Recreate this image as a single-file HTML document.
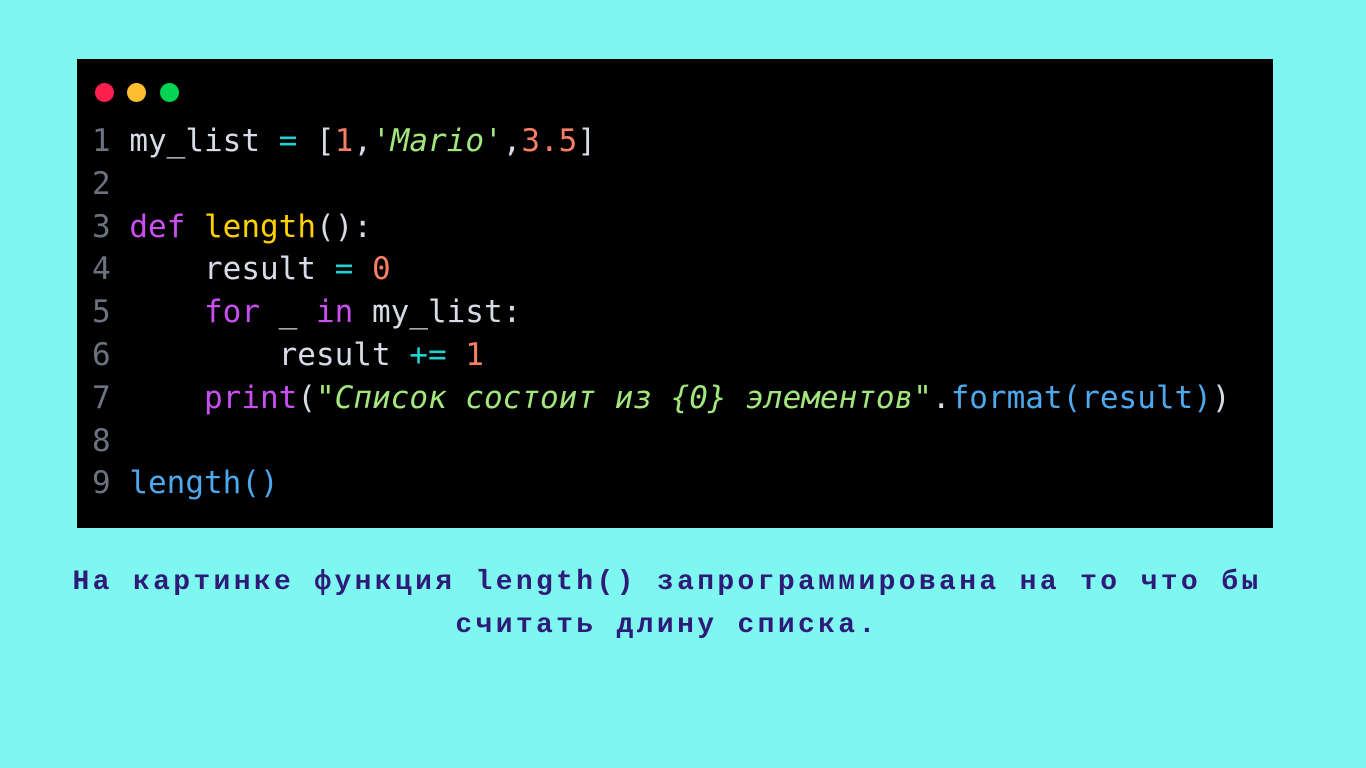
<!DOCTYPE html>
<html><head><meta charset="utf-8"><style>
body{margin:0;width:1366px;height:768px;background:#7df7ef;position:relative;overflow:hidden}
.win{position:absolute;left:77px;top:59px;width:1196px;height:469px;background:#000}
.dot{position:absolute;top:24px;width:19px;height:19px;border-radius:50%}
pre{position:absolute;left:15px;top:61px;margin:0;font-family:"DejaVu Sans Mono",monospace;font-size:31px;line-height:42.8px;color:#d6dbe6;white-space:pre}
.n{color:#6b7280}.k{color:#c94ff0}.f{color:#ffd000}.o{color:#1fd2d2}.num{color:#f97e66}.s{color:#a3e67d;font-style:italic}.b{color:#4ea8ec}
.cap{position:absolute;left:-16px;width:1366px;top:561px;text-align:center;font-family:"Liberation Mono",monospace;font-weight:bold;font-size:28px;letter-spacing:3.35px;line-height:43px;color:#2e1a78}
</style></head><body>
<div class="win">
<div class="dot" style="left:18px;background:#ff1f4f"></div>
<div class="dot" style="left:50px;background:#ffbe2e"></div>
<div class="dot" style="left:83px;background:#00d450"></div>
<pre><span class="n">1</span> my_list <span class="o">=</span> [<span class="num">1</span>,<span class="s">'Mario'</span>,<span class="num">3.5</span>]
<span class="n">2</span>
<span class="n">3</span> <span class="k">def</span> <span class="f">length</span>():
<span class="n">4</span>     result <span class="o">=</span> <span class="num">0</span>
<span class="n">5</span>     <span class="k">for</span> _ <span class="k">in</span> my_list:
<span class="n">6</span>         result <span class="o">+=</span> <span class="num">1</span>
<span class="n">7</span>     <span class="k">print</span>(<span class="s">"Список состоит из {0} элементов"</span>.<span class="b">format(result)</span>)
<span class="n">8</span>
<span class="n">9</span> <span class="b">length()</span></pre>
</div>
<div class="cap">На картинке функция length() запрограммирована на то что бы<br>считать длину списка.</div>
</body></html>
